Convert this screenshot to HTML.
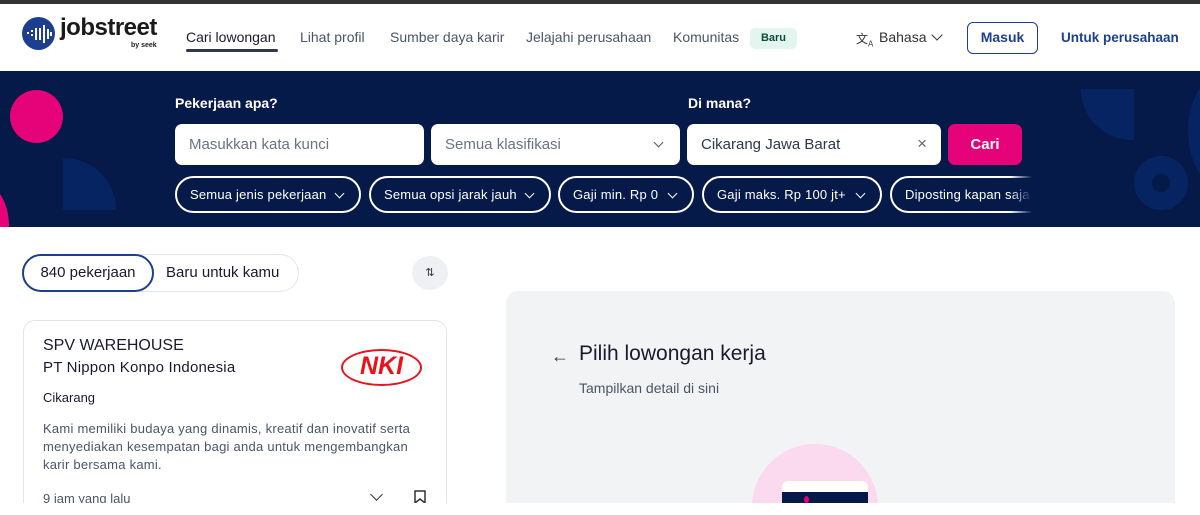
<!DOCTYPE html>
<html><head><meta charset="utf-8"><style>
*{box-sizing:border-box;margin:0;padding:0}
body{width:1200px;height:515px;overflow:hidden;background:#fff;font-family:"Liberation Sans",sans-serif;color:#2e3849;position:relative}
.abs{position:absolute}
.topbar{left:0;top:0;width:1200px;height:4px;background:#333}
.nav a{position:absolute;top:29px;font-size:14px;color:#4a5568;white-space:nowrap}
.hero{left:0;top:71px;width:1200px;height:156px;background:#051a49;overflow:hidden}
.box{background:#fff;border-radius:7px;height:41px;top:53px;font-size:15px;color:#6b7280;padding:12px 14px}
.pill{top:105px;height:37px;border:2px solid #fff;border-radius:19px;color:#fff;font-size:13px;padding:9px 13px;white-space:nowrap;letter-spacing:0.2px}
.chev{display:inline-block;width:7px;height:7px;border-right:1.5px solid currentColor;border-bottom:1.5px solid currentColor;transform:rotate(45deg);position:absolute;right:16px;top:12px}
</style></head><body>
<div class="abs topbar"></div>
<div class="abs" style="left:22px;top:17px;width:33px;height:33px;border-radius:50%;background:#1c3f8f"></div>
<svg class="abs" style="left:24px;top:22px" width="30" height="24"><g fill="#fff"><rect x="3" y="10" width="2" height="2"/><rect x="7" y="8" width="2" height="2"/><rect x="7" y="12" width="2" height="2"/><rect x="11" y="6" width="2" height="12"/><rect x="15" y="6" width="2" height="12"/><rect x="19" y="3" width="2" height="18"/><rect x="23" y="7" width="2" height="10"/><rect x="26" y="10" width="2" height="4"/></g></svg>
<div class="abs" style="left:60px;top:14px;font-size:24px;font-weight:bold;color:#1a1a1a;letter-spacing:-0.5px">jobstreet</div>
<div class="abs" style="left:131px;top:42px;font-size:7px;font-weight:bold;color:#1a1a1a">by seek</div>
<div class="nav">
<a style="left:186px;color:#1a1a2e">Cari lowongan</a>
<a style="left:300px">Lihat profil</a>
<a style="left:390px">Sumber daya karir</a>
<a style="left:526px">Jelajahi perusahaan</a>
<a style="left:673px">Komunitas</a>
</div>
<div class="abs" style="left:186px;top:49px;width:92px;height:3px;background:#2e3849;border-radius:2px"></div>
<div class="abs" style="left:750px;top:28px;width:47px;height:21px;background:#e3f5ef;border-radius:5px;font-size:11px;font-weight:bold;color:#0d4a3b;text-align:center;line-height:21px">Baru</div>
<div class="abs" style="left:856px;top:30px;font-size:12px;color:#333">文<sub style="font-size:8px">A</sub></div>
<div class="abs" style="left:879px;top:29px;font-size:14px;color:#333">Bahasa</div>
<span class="abs" style="left:933px;top:31px;width:8px;height:8px;border-right:1.5px solid #333;border-bottom:1.5px solid #333;transform:rotate(45deg)"></span>
<div class="abs" style="left:967px;top:22px;width:71px;height:32px;border:1.5px solid #1c3f8f;border-radius:6px;color:#1c3f8f;font-weight:bold;font-size:14px;text-align:center;line-height:29px">Masuk</div>
<div class="abs" style="left:1061px;top:30px;font-size:13.5px;font-weight:bold;color:#1c3f8f">Untuk perusahaan</div>

<div class="abs hero">
<div class="abs" style="left:10px;top:19px;width:53px;height:53px;border-radius:50%;background:#e60278"></div>
<div class="abs" style="left:63px;top:87px;width:53px;height:52px;background:#072462;border-top-right-radius:53px"></div>
<div class="abs" style="left:-45px;top:112px;width:54px;height:86px;border-radius:50%;background:#e60278"></div>
<div class="abs" style="left:1081px;top:18px;width:53px;height:51px;background:#072462;border-bottom-left-radius:53px"></div>
<div class="abs" style="left:1134px;top:85px;width:54px;height:54px;border-radius:50%;border:18px solid #072462"></div>
<div class="abs" style="left:1188px;top:0px;width:80px;height:120px;border-radius:50%;background:#072462"></div>
<div class="abs" style="left:175px;top:24px;color:#fff;font-weight:bold;font-size:14px">Pekerjaan apa?</div>
<div class="abs" style="left:688px;top:24px;color:#fff;font-weight:bold;font-size:14px">Di mana?</div>
<div class="abs box" style="left:175px;width:249px">Masukkan kata kunci</div>
<div class="abs box" style="left:431px;width:249px">Semua klasifikasi<span class="chev" style="right:18px;top:15px;color:#555"></span></div>
<div class="abs box" style="left:687px;width:254px;color:#2e3849">Cikarang Jawa Barat<span style="position:absolute;right:14px;top:10px;font-size:17px;color:#666">×</span></div>
<div class="abs box" style="left:948px;width:74px;background:#e60278;color:#fff;font-weight:bold;text-align:center;padding:12px 0">Cari</div>
<div class="abs pill" style="left:175px;width:186px">Semua jenis pekerjaan<span class="chev"></span></div>
<div class="abs pill" style="left:369px;width:182px">Semua opsi jarak jauh<span class="chev"></span></div>
<div class="abs pill" style="left:558px;width:136px">Gaji min. Rp 0<span class="chev"></span></div>
<div class="abs pill" style="left:702px;width:180px">Gaji maks. Rp 100 jt+<span class="chev"></span></div>
<div class="abs" style="left:890px;top:105px;width:142px;height:37px;overflow:hidden">
<div class="abs pill" style="left:0;top:0;width:180px">Diposting kapan saja</div>
<div class="abs" style="left:120px;top:0;width:22px;height:37px;background:linear-gradient(90deg,rgba(5,26,73,0),#051a49)"></div>
</div>
</div>

<div class="abs" style="left:22px;top:254px;width:277px;height:38px;border:1px solid #e2e5ea;border-radius:19px"></div>
<div class="abs" style="left:22px;top:254px;width:132px;height:38px;border:2px solid #1c3f8f;border-radius:19px;font-size:15px;text-align:center;line-height:34px;color:#1a1a2e">840 pekerjaan</div>
<div class="abs" style="left:166px;top:264px;font-size:15px;color:#1a1a2e">Baru untuk kamu</div>
<div class="abs" style="left:412px;top:256px;width:36px;height:34px;border-radius:50%;background:#eef0f3;font-size:11px;text-align:center;line-height:34px;color:#333">⇅</div>

<div class="abs" style="left:23px;top:320px;width:424px;height:195px;border:1px solid #e2e5ea;border-bottom:none;border-radius:12px 12px 0 0"></div>
<div class="abs" style="left:43px;top:337px;font-size:16px;color:#1a1a2e">SPV WAREHOUSE</div>
<div class="abs" style="left:43px;top:359px;font-size:15px;color:#1a1a2e;letter-spacing:0.2px">PT Nippon Konpo Indonesia</div>
<div class="abs" style="left:341px;top:349px;width:81px;height:37px;border:2.5px solid #e8141c;border-radius:50%;color:#e8141c;font-weight:bold;font-style:italic;font-size:25px;text-align:center;line-height:31px">NKI</div>
<div class="abs" style="left:43px;top:390px;font-size:13px;color:#1a1a2e">Cikarang</div>
<div class="abs" style="left:43px;top:420px;width:388px;font-size:13px;line-height:18px;color:#4a5568;letter-spacing:0.25px">Kami memiliki budaya yang dinamis, kreatif dan inovatif serta menyediakan kesempatan bagi anda untuk mengembangkan karir bersama kami.</div>

<div class="abs" style="left:506px;top:291px;width:669px;height:224px;background:#f2f3f5;border-radius:12px 12px 0 0;overflow:hidden">
<div class="abs" style="left:45px;top:55px;font-size:18px;color:#2e3849">←</div>
<div class="abs" style="left:73px;top:51px;font-size:21px;color:#1a1a2e">Pilih lowongan kerja</div>
<div class="abs" style="left:73px;top:89px;font-size:14px;color:#4a5568">Tampilkan detail di sini</div>
<div class="abs" style="left:246px;top:153px;width:126px;height:126px;border-radius:50%;background:#fbd9ee"></div>
<div class="abs" style="left:276px;top:190px;width:86px;height:34px;background:#fff;border-radius:6px 6px 0 0"></div>
<div class="abs" style="left:276px;top:201px;width:86px;height:23px;background:#051a49"></div>
<div class="abs" style="left:298px;top:205px;width:5px;height:7px;border-radius:50%;background:#e60278"></div>
</div>
<div class="abs" style="left:0;top:503px;width:1200px;height:12px;background:#fff"></div>
<div class="abs" style="left:43px;top:491px;font-size:13px;color:#4a5568;height:12px;overflow:hidden">9 jam yang lalu</div>
<span class="abs" style="left:372px;top:490px;width:9px;height:9px;border-right:1.5px solid #333;border-bottom:1.5px solid #333;transform:rotate(45deg)"></span>
<svg class="abs" style="left:414px;top:490px" width="12" height="13"><path d="M1 1h10v12l-5-4-5 4z" fill="none" stroke="#333" stroke-width="1.5"/></svg>
</body></html>
